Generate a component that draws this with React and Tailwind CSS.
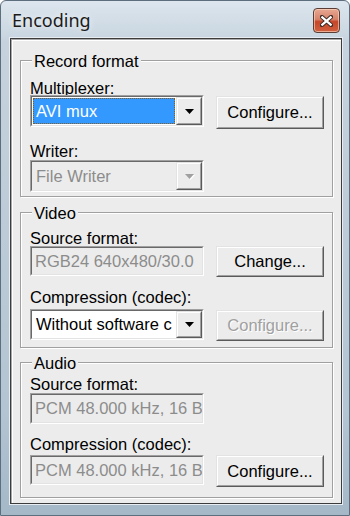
import React from "react";

const FACE = "bg-[#ececec]";

function Sunken({ className = "", inner = "", children }) {
  return (
    <div className={`border border-t-[#a0a0a0] border-l-[#a0a0a0] border-b-white border-r-white ${className}`}>
      <div className={`h-full w-full border border-t-[#696969] border-l-[#696969] border-b-[#e3e3e3] border-r-[#e3e3e3] flex ${inner}`}>
        {children}
      </div>
    </div>
  );
}

function Raised({ className = "", children }) {
  return (
    <div className={`border border-t-[#e3e3e3] border-l-[#e3e3e3] border-b-[#5a5a5a] border-r-[#5a5a5a] ${FACE} ${className}`}>
      <div className="h-full w-full border border-t-white border-l-white border-b-[#a0a0a0] border-r-[#a0a0a0] flex items-center justify-center">
        {children}
      </div>
    </div>
  );
}

function Arrow({ disabled }) {
  return (
    <svg width="9" height="5" viewBox="0 0 9 5" className={disabled ? "drop-shadow-[1px_1px_0_#ffffff]" : ""}>
      <path d="M0 0 H9 L4.5 5 Z" fill={disabled ? "#a0a0a0" : "#000"} />
    </svg>
  );
}

function DropBtn({ disabled }) {
  return (
    <Raised className="w-[26px] h-full shrink-0">
      <Arrow disabled={disabled} />
    </Raised>
  );
}

function Button({ children, disabled, className = "" }) {
  return (
    <Raised className={`w-[108px] ${className}`}>
      <span
        className={
          disabled
            ? "text-[#a0a0a0] [text-shadow:1px_1px_0_#ffffff]"
            : "text-black"
        }
      >
        {children}
      </span>
    </Raised>
  );
}

function Group({ title, className = "", children }) {
  return (
    <div
      className={`relative w-[313px] border border-[#a0a0a0] shadow-[inset_1px_1px_0_#ffffff,1px_1px_0_#ffffff] pl-[9px] ${className}`}
    >
      <span className={`absolute left-[11px] top-[-9px] px-[2px] leading-[18px] ${FACE}`}>
        {title}
      </span>
      {children}
    </div>
  );
}

function Label({ children, className = "" }) {
  return <div className={`leading-[22px] h-[18px] whitespace-nowrap ${className}`}>{children}</div>;
}

export default function App() {
  return (
    <div className="w-[350px] h-[516px] overflow-hidden font-['Liberation_Sans',Arial,sans-serif] text-[16.5px] text-black">
      <div className="w-[350px] h-[516px] border border-[#5d6e7e] rounded-t-[6px] bg-[linear-gradient(to_bottom,#dde6ee,#c6d3de_8%,#bccbd7_45%,#b3c4d2_80%,#a4b8c8)] flex flex-col">
        {/* Title bar */}
        <div className="h-[36px] shrink-0 flex items-start justify-between pl-[11px] pr-[9px]">
          <span className="mt-[7px] leading-[24px] text-[18px] text-[#1b1b1b] font-['Noto_Sans',sans-serif] [text-shadow:0_0_6px_rgba(255,255,255,0.9)]">
            Encoding
          </span>
          <div className="mt-[7px] w-[27px] h-[25px] rounded-[4px] border border-[#5a3d35] bg-[linear-gradient(to_bottom,#e7a893,#d7826a_45%,#c6462a_55%,#d0603f)] shadow-[inset_0_0_0_1px_rgba(255,220,200,0.6)] flex items-center justify-center">
            <svg width="13" height="12" viewBox="0 0 13 12">
              <path d="M2 2 L11 10 M11 2 L2 10" stroke="#3b2a25" strokeWidth="4.2" strokeLinecap="square" />
              <path d="M2.3 2.3 L10.7 9.7 M10.7 2.3 L2.3 9.7" stroke="#ffffff" strokeWidth="2.2" strokeLinecap="square" />
            </svg>
          </div>
        </div>

        {/* Client area */}
        <div className="ml-[8px] w-[334px] h-[468px] border border-[#e7edf2]">
          <div className={`h-full w-full border border-[#3c3c3c] ${FACE} shadow-[inset_1px_1px_0_#a8a8a8,inset_2px_2px_0_#ffffff] pl-[9px] pt-[21px]`}>
            {/* Record format */}
            <Group title="Record format" className="h-[137px]">
              <Label className="mt-[16px]">Multiplexer:</Label>
              <div className="flex items-start gap-[12px]">
                <Sunken className="w-[174px] h-[32px]" inner="bg-white">
                  <div className="flex-1 p-[1px] min-w-0">
                    <div className="h-full bg-[#3399ff] border border-dotted border-[#8a5a1c] text-white leading-[24px] pl-[2px]">
                      AVI mux
                    </div>
                  </div>
                  <DropBtn />
                </Sunken>
                <Button className="h-[33px] mt-[1px]">Configure...</Button>
              </div>
              <Label className="mt-[11px]">Writer:</Label>
              <Sunken className="mt-[2px] w-[174px] h-[32px]" inner={FACE}>
                <div className="flex-1 min-w-0 overflow-hidden whitespace-nowrap pl-[4px] leading-[28px] text-[#8c8c8c]">
                  File Writer
                </div>
                <DropBtn disabled />
              </Sunken>
            </Group>

            {/* Video */}
            <Group title="Video" className="mt-[15px] h-[136px]">
              <Label className="mt-[14px]">Source format:</Label>
              <div className="mt-[1px] flex items-start gap-[12px]">
                <Sunken className="w-[174px] h-[30px]" inner={FACE}>
                  <div className="flex-1 min-w-0 overflow-hidden whitespace-nowrap pl-[3px] leading-[26px] text-[#8c8c8c]">
                    RGB24 640x480/30.0
                  </div>
                </Sunken>
                <Button className="h-[31px]">Change...</Button>
              </div>
              <Label className="mt-[9px]">Compression (codec):</Label>
              <div className="mt-[5px] flex items-start gap-[12px]">
                <Sunken className="w-[174px] h-[31px]" inner="bg-white">
                  <div className="flex-1 min-w-0 overflow-hidden whitespace-nowrap pl-[4px] leading-[27px]">
                    Without software c
                  </div>
                  <DropBtn />
                </Sunken>
                <Button disabled className="h-[31px] mt-[1px]">Configure...</Button>
              </div>
            </Group>

            {/* Audio */}
            <Group title="Audio" className="mt-[14px] h-[136px]">
              <Label className="mt-[10px]">Source format:</Label>
              <Sunken className="mt-[2px] w-[174px] h-[31px]" inner={FACE}>
                <div className="flex-1 min-w-0 overflow-hidden whitespace-nowrap pl-[3px] leading-[27px] text-[#8c8c8c]">
                  PCM 48.000 kHz, 16 B
                </div>
              </Sunken>
              <Label className="mt-[9px]">Compression (codec):</Label>
              <div className="mt-[4px] flex items-start gap-[12px]">
                <Sunken className="w-[174px] h-[30px]" inner={FACE}>
                  <div className="flex-1 min-w-0 overflow-hidden whitespace-nowrap pl-[3px] leading-[26px] text-[#8c8c8c]">
                    PCM 48.000 kHz, 16 B
                  </div>
                </Sunken>
                <Button className="h-[32px]">Configure...</Button>
              </div>
            </Group>
          </div>
        </div>
      </div>
    </div>
  );
}
